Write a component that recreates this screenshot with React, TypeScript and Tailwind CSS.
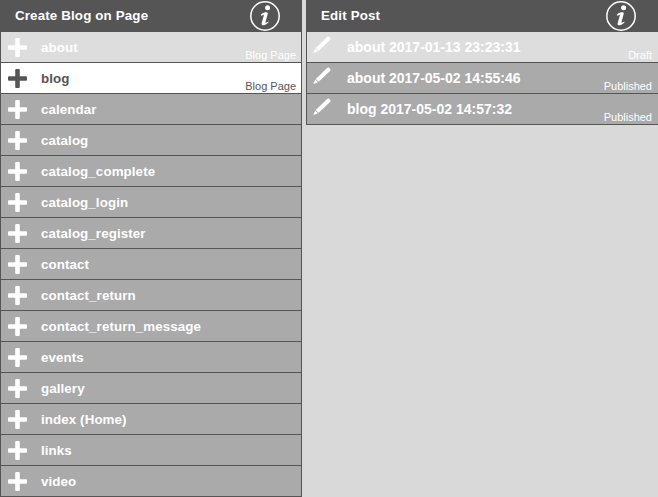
const PAGES = [
  "about",
  "blog",
  "calendar",
  "catalog",
  "catalog_complete",
  "catalog_login",
  "catalog_register",
  "contact",
  "contact_return",
  "contact_return_message",
  "events",
  "gallery",
  "index (Home)",
  "links",
  "video",
];

const POSTS = [
  { title: "about 2017-01-13 23:23:31", status: "Draft" },
  { title: "about 2017-05-02 14:55:46", status: "Published" },
  { title: "blog 2017-05-02 14:57:32", status: "Published" },
];

function InfoIcon() {
  return (
    <svg viewBox="0 0 32 32" className="h-[32px] w-[32px]">
      <circle cx="16" cy="16" r="14.2" fill="none" stroke="#fff" strokeWidth="1.5" />
      <circle cx="18.6" cy="7.8" r="2.5" fill="#fff" />
      <path
        d="M12 14.4c2-1.6 3.6-2.1 5.6-2.1 1 0 1.4.7 1.1 1.8l-2.2 7.9c-.2.8.3 1 1 .6l1.7-1.1.4.8c-1.8 1.8-3.6 3-5.4 3-1.4 0-1.9-.9-1.5-2.3l2.1-7.4c.2-.8-.2-1-.9-.6l-1.5.9z"
        fill="#fff"
      />
    </svg>
  );
}

function PlusIcon({ color }: { color: string }) {
  return (
    <svg viewBox="0 0 19 19" className="h-[19px] w-[19px]" fill={color}>
      <rect x="7.2" y="0" width="4.6" height="19" rx="1" />
      <rect x="0" y="7.2" width="19" height="4.6" rx="1" />
    </svg>
  );
}

function PencilIcon() {
  return (
    <svg viewBox="0 0 19 19" className="mb-[4px] ml-[1px] h-[18px] w-[18px]" fill="#fff">
      <path d="M14.9 1.1c.7-.7 1.6-.7 2.3-.1l.8.8c.7.7.7 1.6 0 2.3L6 15.6l-3.1-3z" />
      <path d="M2.5 13.3l2.8 2.8-4.1 1.6c-.5.2-.9-.2-.7-.7z" />
    </svg>
  );
}

function PanelHeader({ title }: { title: string }) {
  return (
    <div className="flex h-[32px] items-center justify-between bg-[#555555] pr-[21px] pl-[15px]">
      <span className="text-[13.33px] font-bold tracking-[0.15px] text-white">{title}</span>
      <InfoIcon />
    </div>
  );
}

function PageRow({ name, index }: { name: string; index: number }) {
  const hover = index === 0;
  const active = index === 1;
  const bg = active ? "bg-white" : hover ? "bg-[#dddddd]" : "bg-[#aaaaaa]";
  const text = active ? "text-[#555555]" : "text-white";

  return (
    <div className={`relative flex h-[31px] items-center border-b border-[#555555] pl-[7px] ${bg}`}>
      <PlusIcon color={active ? "#555555" : "#ffffff"} />
      <span className={`mt-[2px] ml-[14px] text-[13.33px] font-bold tracking-[0.1px] ${text}`}>{name}</span>
      {index < 2 && (
        <span className={`absolute right-[5px] bottom-0 text-[11px] leading-[14px] ${text}`}>Blog Page</span>
      )}
    </div>
  );
}

function PostRow({ title, status, index }: { title: string; status: string; index: number }) {
  return (
    <div
      className={`relative flex h-[31px] items-center border-b border-[#555555] pl-[5px] text-white ${
        index === 0 ? "bg-[#dddddd]" : "bg-[#aaaaaa]"
      }`}
    >
      <PencilIcon />
      <span className="ml-[16px] text-[14px] font-bold">{title}</span>
      <span className="absolute right-[6px] bottom-0 text-[11px] leading-[14px]">{status}</span>
    </div>
  );
}

export default function App() {
  return (
    <div className="flex h-[497px] w-[658px] gap-[4px] overflow-hidden bg-[#d9d9d9] font-['Liberation_Sans',Arial,sans-serif]">
      <div className="w-[302px] shrink-0">
        <PanelHeader title="Create Blog on Page" />
        <div className="border-x border-[#555555]">
          {PAGES.map((name, i) => (
            <PageRow key={name} name={name} index={i} />
          ))}
        </div>
      </div>
      <div className="min-w-0 flex-1">
        <PanelHeader title="Edit Post" />
        <div className="border-l border-[#555555]">
          {POSTS.map((post, i) => (
            <PostRow key={post.title} title={post.title} status={post.status} index={i} />
          ))}
        </div>
      </div>
    </div>
  );
}
